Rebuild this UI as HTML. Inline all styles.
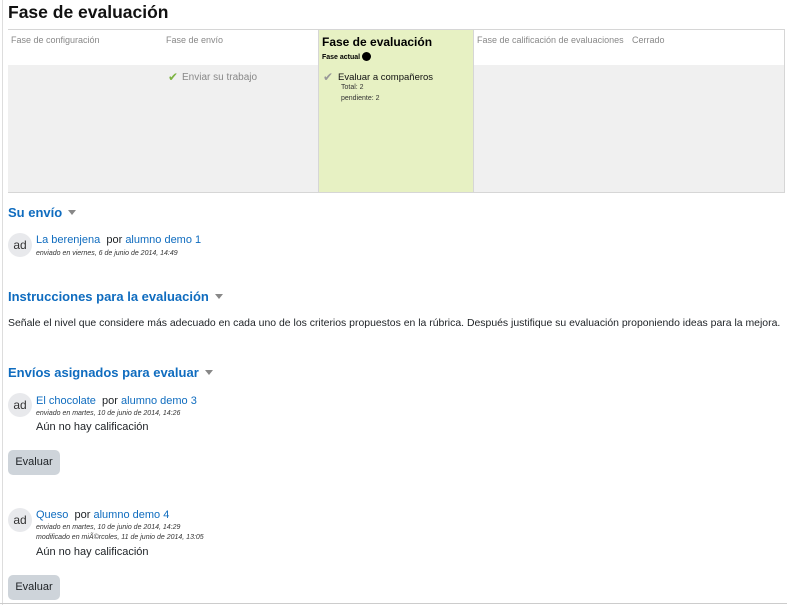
<!DOCTYPE html>
<html><head><meta charset="utf-8"><style>
body{margin:0;width:787px;height:605px;background:#fff;font-family:"Liberation Sans","DejaVu Sans",sans-serif;color:#1d2125;position:relative;overflow:hidden}
.a{position:absolute;white-space:nowrap}
.link{color:#0f6cbf}
.h{color:#0f6cbf;font-weight:bold;font-size:13px}
.caret{display:inline-block;width:0;height:0;border-left:4px solid transparent;border-right:4px solid transparent;border-top:5px solid #888;margin-left:6px;vertical-align:2px}
.av{position:absolute;width:24px;height:24px;border-radius:50%;background:#e8e9ec;font-size:12px;line-height:24px;text-align:center;color:#333}
.sm{font-size:7px;font-style:italic;color:#333}
.btn{position:absolute;width:52px;height:25px;background:#ced4da;border-radius:5px;font-size:11px;line-height:25px;text-align:center}
.col{position:absolute;top:30px;height:162px;border-right:1px solid #d6d6d6}
.hd{position:absolute;top:0;left:0;right:0;height:35px;background:#fff;border-bottom:1px solid #dee2e6}
.bd{position:absolute;top:35px;left:0;right:0;bottom:0;background:#f0f0f0}
.ht{font-size:9px;color:#888;position:absolute;left:3px;top:5px;white-space:nowrap}
</style></head><body>
<div class="a" style="top:0;width:1px;height:605px;background:#ddd;left:2px"></div>
<div class="a" style="left:0;top:603px;width:787px;height:1px;background:#ccc"></div>
<div class="a" style="left:8px;top:2px;font-size:17.5px;font-weight:bold;color:#111">Fase de evaluación</div>
<div class="a" style="left:8px;top:29px;width:777px;height:164px;border:1px solid #d6d6d6;box-sizing:border-box"></div>
<div class="col" style="left:8px;width:155px"><div class="hd"><span class="ht">Fase de configuración</span></div><div class="bd"></div></div>
<div class="col" style="left:163px;width:155px"><div class="hd"><span class="ht">Fase de envío</span></div><div class="bd">
<span class="a" style="left:5px;top:5px;color:#7cb342;font-size:12px">✔</span><span class="a" style="left:19px;top:7px;font-size:10px;color:#888">Enviar su trabajo</span></div></div>
<div class="col" style="left:319px;width:154px;background:#e7f1c3">
<div class="a" style="left:3px;top:5px;font-size:12px;font-weight:bold;color:#000">Fase de evaluación</div>
<div class="a" style="left:3px;top:22px;font-size:7px;font-weight:bold;color:#000">Fase actual <span style="display:inline-block;width:9px;height:9px;border-radius:50%;background:#000;vertical-align:-2px"></span></div>
<span class="a" style="left:4px;top:40px;color:#999;font-size:12px">✔</span>
<div class="a" style="left:19px;top:42px;font-size:9.5px;color:#111">Evaluar a compañeros</div>
<div class="a" style="left:22px;top:54px;font-size:7px;color:#333">Total: 2</div>
<div class="a" style="left:22px;top:65px;font-size:7px;color:#333">pendiente: 2</div>
</div>
<div class="col" style="left:474px;width:155px"><div class="hd"><span class="ht">Fase de calificación de evaluaciones</span></div><div class="bd"></div></div>
<div class="col" style="left:629px;width:155px;border-right:none"><div class="hd"><span class="ht">Cerrado</span></div><div class="bd"></div></div>

<div class="a h" style="left:8px;top:205px">Su envío<span class="caret"></span></div>
<div class="av" style="left:8px;top:233px">ad</div>
<div class="a" style="left:36px;top:234px;font-size:11px"><span class="link">La berenjena</span>&nbsp; por <span class="link">alumno demo 1</span></div>
<div class="a sm" style="left:36px;top:250px">enviado en viernes, 6 de junio de 2014, 14:49</div>

<div class="a h" style="left:8px;top:289px">Instrucciones para la evaluación<span class="caret"></span></div>
<div class="a" style="left:8px;top:318px;font-size:10.45px">Señale el nivel que considere más adecuado en cada uno de los criterios propuestos en la rúbrica. Después justifique su evaluación proponiendo ideas para la mejora.</div>

<div class="a h" style="left:8px;top:365px">Envíos asignados para evaluar<span class="caret"></span></div>
<div class="av" style="left:8px;top:393px">ad</div>
<div class="a" style="left:36px;top:395px;font-size:11px"><span class="link">El chocolate</span>&nbsp; por <span class="link">alumno demo 3</span></div>
<div class="a sm" style="left:36px;top:410px">enviado en martes, 10 de junio de 2014, 14:26</div>
<div class="a" style="left:36px;top:421px;font-size:11px">Aún no hay calificación</div>
<div class="btn" style="left:8px;top:450px">Evaluar</div>

<div class="av" style="left:8px;top:508px">ad</div>
<div class="a" style="left:36px;top:509px;font-size:11px"><span class="link">Queso</span>&nbsp; por <span class="link">alumno demo 4</span></div>
<div class="a sm" style="left:36px;top:524px">enviado en martes, 10 de junio de 2014, 14:29</div>
<div class="a sm" style="left:36px;top:534px">modificado en miÃ©rcoles, 11 de junio de 2014, 13:05</div>
<div class="a" style="left:36px;top:546px;font-size:11px">Aún no hay calificación</div>
<div class="btn" style="left:8px;top:575px">Evaluar</div>
</body></html>
